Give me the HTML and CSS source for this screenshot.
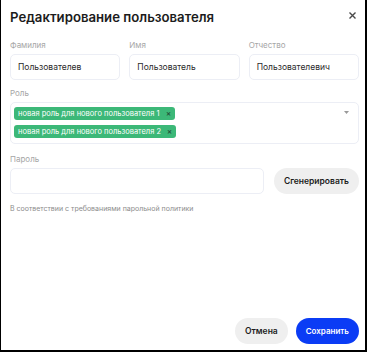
FILE: index.html
```html
<!DOCTYPE html>
<html lang="ru">

<head>
    <meta charset="UTF-8">
    <meta name="viewport" content="width=device-width, initial-scale=1.0">
    <title>Редактирование пользователя</title>
    <link rel="stylesheet" href="styles.css">
</head>

<body>
    <div class="modal">
        <div class="modal-header">
            <h1>Редактирование пользователя</h1>
            <svg class="close" width="7" height="7" viewBox="0 0 7 7"><path d="M0.5 0.5L6.5 6.5M6.5 0.5L0.5 6.5" stroke="#4a4a4a" stroke-width="1.4"/></svg>
        </div>

        <div class="row-3">
            <div class="field">
                <label>Фамилия</label>
                <div class="input">Пользователев</div>
            </div>
            <div class="field">
                <label>Имя</label>
                <div class="input">Пользователь</div>
            </div>
            <div class="field">
                <label>Отчество</label>
                <div class="input">Пользователевич</div>
            </div>
        </div>

        <div class="field field-role">
            <label>Роль</label>
            <div class="select">
                <div class="tags">
                    <span class="tag">новая роль для нового пользователя 1 <i>&#x2715;</i></span>
                    <span class="tag">новая роль для нового пользователя 2 <i>&#x2715;</i></span>
                </div>
                <svg class="arrow" width="5" height="3" viewBox="0 0 5 3"><path d="M0 0h5L2.5 3z" fill="#999"/></svg>
            </div>
        </div>

        <div class="field">
            <label>Пароль</label>
            <div class="password-row">
                <div class="input"></div>
                <button class="btn btn-grey">Сгенерировать</button>
            </div>
            <p class="hint">В соответствии с требованиями парольной политики</p>
        </div>

        <div class="footer">
            <button class="btn btn-grey">Отмена</button>
            <button class="btn btn-blue">Сохранить</button>
        </div>
    </div>
</body>

</html>
```

FILE: styles.css
```css
html,
body {
    margin: 0;
    height: 100%;
}

body {
    font-family: Inter, 'Noto Sans', sans-serif;
    background-color: #ffffff;
    color: #222;
    box-sizing: border-box;
    border-left: 1px solid #000;
    border-right: 2px solid #000;
    border-bottom: 2px solid #000;
}

.modal {
    height: 100%;
    box-sizing: border-box;
    padding: 7px 6px 6px 9px;
    display: flex;
    flex-direction: column;
}

.modal-header {
    display: flex;
    justify-content: space-between;
    align-items: center;
    height: 20px;
    margin-bottom: 13px;
}

h1 {
    margin: 0;
    font-size: 13.2px;
    font-weight: 600;
    color: #1c1c1c;
}

.close {
    margin-right: 3px;
    margin-top: -3px;
}

.row-3 {
    display: grid;
    grid-template-columns: 1fr 1fr 1fr;
    gap: 9px;
}

.field label {
    display: block;
    font-size: 8px;
    color: #a6a6a6;
    line-height: 10px;
    margin-bottom: 4px;
}

.field {
    margin-bottom: 8px;
}

.field-role {
    margin-bottom: 10px;
}

.field-role .select {
    margin-top: 1px;
}

.input {
    height: 26px;
    box-sizing: border-box;
    border: 1px solid #eceef5;
    border-radius: 5px;
    padding: 0 7px;
    display: flex;
    align-items: center;
    font-size: 8.5px;
    color: #2a2a2a;
}

.select {
    border: 1px solid #eceef5;
    border-radius: 5px;
    padding: 4px 9px 5px 3px;
    display: flex;
    justify-content: space-between;
    align-items: flex-start;
}

.tags {
    display: flex;
    flex-direction: column;
    align-items: flex-start;
    gap: 5px;
}

.tag {
    background-color: #3cb878;
    color: #fff;
    font-size: 7.5px;
    line-height: 13px;
    height: 13px;
    padding: 0 4px;
    border-radius: 3px;
    white-space: nowrap;
}

.tag i {
    font-style: normal;
    font-size: 5.5px;
    color: #24503a;
    margin-left: 4px;
    font-weight: 700;
}

.arrow {
    margin-top: 4px;
}

.password-row {
    display: flex;
    gap: 10px;
}

.password-row .input {
    flex: 1;
}

.btn {
    border: none;
    font-family: inherit;
    font-size: 8.5px;
    font-weight: 600;
    height: 26px;
    border-radius: 13px;
    padding: 0 10px;
}

.btn-grey {
    background-color: #efefef;
    color: #1c1c1c;
}

.btn-blue {
    background-color: #0b3cf5;
    color: #fff;
    font-size: 8px;
}

.hint {
    margin: 10px 0 0;
    font-size: 7px;
    color: #8c8c8c;
}

.footer {
    margin-top: auto;
    display: flex;
    justify-content: flex-end;
    gap: 8px;
}
```
